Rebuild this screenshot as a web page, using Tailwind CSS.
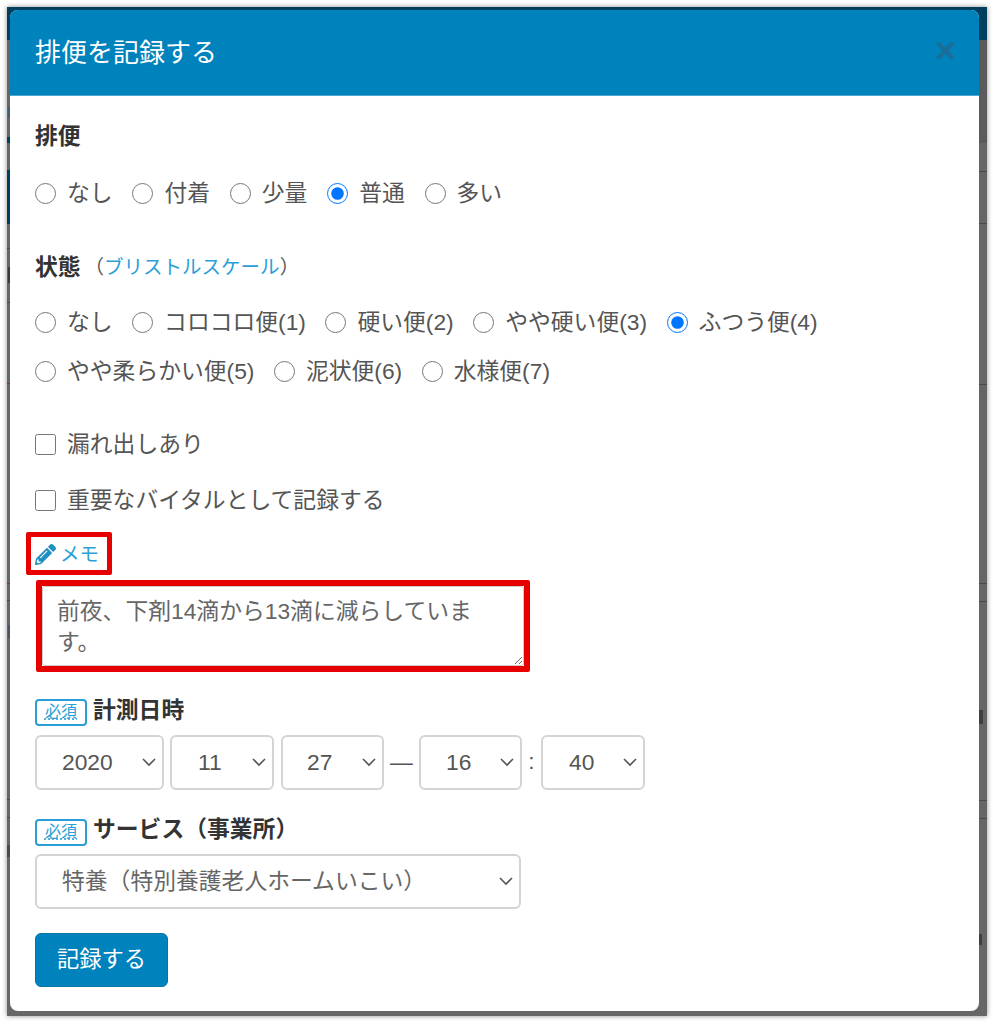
<!DOCTYPE html>
<html lang="ja">
<head>
<meta charset="utf-8">
<title>排便を記録する</title>
<script src="https://cdn.jsdelivr.net/npm/@tailwindcss/browser@4"></script>
</head>
<body class="bg-white w-[993px] h-[1024px] overflow-hidden font-['Liberation_Sans','Noto_Sans_CJK_JP',sans-serif] text-[22.8px] text-[#555]">
<div class="relative ml-[7px] mt-[7px] w-[980px] h-[1009px] bg-[#666] shadow-[0_0_5px_rgba(0,0,0,0.45)] pl-[3px] pt-[3px] overflow-hidden">
  <!-- page showing through the backdrop -->
  <div class="absolute left-0 top-0 w-full h-[33px] bg-[#003f5e]"></div>
  <div class="absolute left-[972px] top-[33px] w-[8px] h-[103px] bg-[#5b5b5b]"></div>
  <div class="absolute left-[1px] top-[100px] w-[2px] h-[11px] bg-[#3f5f72]"></div>
  <div class="absolute left-0 top-[130px] w-[3px] h-[6px] bg-[#003f5e]"></div>
  <div class="absolute left-0 top-[163px] w-[3px] h-[54px] bg-[#003f5e]"></div>
  <div class="absolute left-0 top-[241px] w-[3px] h-px bg-[#4a4a4a]"></div>
  <div class="absolute left-[1px] top-[260px] w-[2px] h-[16px] bg-[#3a3a3a]"></div>
  <div class="absolute left-0 top-[295px] w-[3px] h-px bg-[#4a4a4a]"></div>
  <div class="absolute left-0 top-[376px] w-[3px] h-px bg-[#7a3a34]"></div>
  <div class="absolute left-0 top-[576px] w-[3px] h-px bg-[#7a3a34]"></div>
  <div class="absolute left-0 top-[593px] w-[3px] h-px bg-[#4a4a4a]"></div>
  <div class="absolute left-[1px] top-[618px] w-[2px] h-[13px] bg-[#4a5560]"></div>
  <div class="absolute left-0 top-[792px] w-[3px] h-px bg-[#4a4a4a]"></div>
  <div class="absolute left-0 top-[810px] w-[3px] h-px bg-[#4a4a4a]"></div>
  <div class="absolute left-0 top-[838px] w-[3px] h-[12px] bg-[#4a4a4a]"></div>
  <div class="absolute left-[972px] top-[164px] w-[8px] h-px bg-[#4a4a4a]"></div>
  <div class="absolute left-[972px] top-[216px] w-[8px] h-px bg-[#4a4a4a]"></div>
  <div class="absolute left-[972px] top-[377px] w-[8px] h-px bg-[#4a4a4a]"></div>
  <div class="absolute left-[972px] top-[576px] w-[8px] h-px bg-[#4a4a4a]"></div>
  <div class="absolute left-[972px] top-[594px] w-[8px] h-px bg-[#4a4a4a]"></div>
  <div class="absolute left-[972px] top-[793px] w-[8px] h-px bg-[#4a4a4a]"></div>
  <div class="absolute left-[972px] top-[811px] w-[8px] h-px bg-[#4a4a4a]"></div>
  <div class="absolute left-[972px] top-[703px] w-[4px] h-[14px] bg-[#3f3f3f]"></div>
  <div class="absolute left-[972px] top-[927px] w-[3px] h-[11px] bg-[#3f3f3f]"></div>

  <main class="relative w-[969px] h-[1001px] bg-white rounded-[8px] overflow-hidden flex flex-col">
    <header class="h-[86px] shrink-0 bg-[#0082bd] border-b border-[#4da8d1] flex items-center justify-between pl-[25px] pr-[23px]">
      <h1 class="text-[26px] leading-none text-white font-normal mt-[1px]">排便を記録する</h1>
      <span class="text-[36px] leading-none font-bold text-[#1a6e98] -mt-[4px]">×</span>
    </header>

    <div class="pl-[25px] flex flex-col">
      <div class="mt-[26px] h-[28px] flex items-center font-bold text-[#333]">排便</div>

      <div class="mt-[27px] h-[32px] flex items-center gap-[19.8px]">
        <label class="flex items-center gap-[11px]"><input type="radio" name="a" class="m-0 w-[21px] h-[21px]"><span>なし</span></label>
        <label class="flex items-center gap-[11px]"><input type="radio" name="a" class="m-0 w-[21px] h-[21px]"><span>付着</span></label>
        <label class="flex items-center gap-[11px]"><input type="radio" name="a" class="m-0 w-[21px] h-[21px]"><span>少量</span></label>
        <label class="flex items-center gap-[11px]"><input type="radio" name="a" checked class="m-0 w-[21px] h-[21px]"><span>普通</span></label>
        <label class="flex items-center gap-[11px]"><input type="radio" name="a" class="m-0 w-[21px] h-[21px]"><span>多い</span></label>
      </div>

      <div class="mt-[44px] h-[28px] flex items-center"><span class="font-bold text-[#333]">状態</span><span class="ml-[4px] mt-[1px] text-[19.5px]">（<a class="text-[#2a9fd6]">ブリストルスケール</a>）</span></div>

      <div class="mt-[25px] h-[32px] flex items-center gap-[19.5px]">
        <label class="flex items-center gap-[11px]"><input type="radio" name="b" class="m-0 w-[21px] h-[21px]"><span>なし</span></label>
        <label class="flex items-center gap-[11px]"><input type="radio" name="b" class="m-0 w-[21px] h-[21px]"><span>コロコロ便(1)</span></label>
        <label class="flex items-center gap-[11px]"><input type="radio" name="b" class="m-0 w-[21px] h-[21px]"><span>硬い便(2)</span></label>
        <label class="flex items-center gap-[11px]"><input type="radio" name="b" class="m-0 w-[21px] h-[21px]"><span>やや硬い便(3)</span></label>
        <label class="flex items-center gap-[11px]"><input type="radio" name="b" checked class="m-0 w-[21px] h-[21px]"><span>ふつう便(4)</span></label>
      </div>
      <div class="mt-[17px] h-[32px] flex items-center gap-[19.5px]">
        <label class="flex items-center gap-[11px]"><input type="radio" name="b" class="m-0 w-[21px] h-[21px]"><span>やや柔らかい便(5)</span></label>
        <label class="flex items-center gap-[11px]"><input type="radio" name="b" class="m-0 w-[21px] h-[21px]"><span>泥状便(6)</span></label>
        <label class="flex items-center gap-[11px]"><input type="radio" name="b" class="m-0 w-[21px] h-[21px]"><span>水様便(7)</span></label>
      </div>

      <label class="mt-[41px] h-[32px] flex items-center gap-[11px]"><input type="checkbox" class="m-0 w-[21px] h-[21px]"><span>漏れ出しあり</span></label>
      <label class="mt-[24px] h-[32px] flex items-center gap-[11px]"><input type="checkbox" class="m-0 w-[21px] h-[21px]"><span>重要なバイタルとして記録する</span></label>

      <a class="mt-[16px] -ml-[9px] w-[86px] h-[43px] border-[5px] border-[#e60000] rounded-[2px] flex items-center gap-[4px] pl-[4px] text-[19.5px] text-[#2a9fd6]">
        <svg class="w-[21px] h-[21px] fill-[#1f8fc4] shrink-0 mt-[1px]" viewBox="0 0 512 512"><path d="M497.9 142.1l-46.1 46.1c-4.7 4.7-12.3 4.7-17 0l-111-111c-4.7-4.7-4.7-12.3 0-17l46.1-46.1c18.7-18.7 49.1-18.7 67.9 0l60.1 60.1c18.8 18.7 18.8 49.1 0 67.9zM284.2 99.8L21.6 362.4.4 483.9c-2.9 16.4 11.4 30.6 27.8 27.8l121.5-21.3 262.6-262.6c4.7-4.7 4.7-12.3 0-17l-111-111c-4.8-4.7-12.4-4.7-17.1 0zM124.1 339.9c-5.5-5.5-5.5-14.3 0-19.8l154-154c5.5-5.5 14.3-5.5 19.8 0s5.5 14.3 0 19.8l-154 154c-5.5 5.5-14.3 5.5-19.8 0zM88 424h48v36.3l-64.5 11.3-31.1-31.1L51.7 376H88v48z"/></svg>
        <span class="mt-[2px]">メモ</span>
      </a>

      <div class="mt-[5px] ml-[1px] w-[494px] h-[92px] border-[6px] border-[#e60000] rounded-[2px] bg-white">
        <textarea class="block w-[482px] h-[80px] pl-[14px] pr-[40px] py-[9px] border border-[#ccc] rounded-[3px] text-[22.8px] leading-[31px] text-[#666] outline-none">前夜、下剤14滴から13滴に減らしています。</textarea>
      </div>

      <div class="mt-[26px] h-[28px] flex items-center gap-[6px]">
        <span class="w-[52px] h-[27px] border-2 border-[#2a9fd6] rounded-[4px] flex items-center justify-center text-[16px] text-[#2a9fd6] underline decoration-dotted underline-offset-2">必須</span>
        <span class="font-bold text-[#333] -mt-[4px]">計測日時</span>
      </div>

      <div class="mt-[9px] h-[55px] flex items-center">
        <div class="relative w-[129px] h-[55px]"><select class="w-full h-full appearance-none bg-white border-2 border-[#d4d4d4] rounded-[6px] pl-[25px] text-[22.8px] text-[#555]"><option>2020</option></select><svg class="absolute right-[7px] top-[22px] w-[16px] h-[10px] fill-none stroke-[#555] stroke-[1.6]" viewBox="0 0 16 10"><path d="M2 2l6 6 6-6"/></svg></div>
        <div class="relative ml-[6px] w-[104px] h-[55px]"><select class="w-full h-full appearance-none bg-white border-2 border-[#d4d4d4] rounded-[6px] pl-[26px] text-[22.8px] text-[#555]"><option>11</option></select><svg class="absolute right-[7px] top-[22px] w-[16px] h-[10px] fill-none stroke-[#555] stroke-[1.6]" viewBox="0 0 16 10"><path d="M2 2l6 6 6-6"/></svg></div>
        <div class="relative ml-[7px] w-[103px] h-[55px]"><select class="w-full h-full appearance-none bg-white border-2 border-[#d4d4d4] rounded-[6px] pl-[24px] text-[22.8px] text-[#555]"><option>27</option></select><svg class="absolute right-[7px] top-[22px] w-[16px] h-[10px] fill-none stroke-[#555] stroke-[1.6]" viewBox="0 0 16 10"><path d="M2 2l6 6 6-6"/></svg></div>
        <span class="w-[35px] text-center">—</span>
        <div class="relative w-[103px] h-[55px]"><select class="w-full h-full appearance-none bg-white border-2 border-[#d4d4d4] rounded-[6px] pl-[25px] text-[22.8px] text-[#555]"><option>16</option></select><svg class="absolute right-[7px] top-[22px] w-[16px] h-[10px] fill-none stroke-[#555] stroke-[1.6]" viewBox="0 0 16 10"><path d="M2 2l6 6 6-6"/></svg></div>
        <span class="w-[19px] text-center -mt-[3px]">:</span>
        <div class="relative w-[104px] h-[55px]"><select class="w-full h-full appearance-none bg-white border-2 border-[#d4d4d4] rounded-[6px] pl-[26px] text-[22.8px] text-[#555]"><option>40</option></select><svg class="absolute right-[7px] top-[22px] w-[16px] h-[10px] fill-none stroke-[#555] stroke-[1.6]" viewBox="0 0 16 10"><path d="M2 2l6 6 6-6"/></svg></div>
      </div>

      <div class="mt-[28px] h-[28px] flex items-center gap-[6px]">
        <span class="w-[52px] h-[27px] border-2 border-[#2a9fd6] rounded-[4px] flex items-center justify-center text-[16px] text-[#2a9fd6] underline decoration-dotted underline-offset-2">必須</span>
        <span class="font-bold text-[#333] -mt-[5px]">サービス（事業所）</span>
      </div>

      <div class="relative mt-[8px] w-[486px] h-[55px]"><select class="w-full h-full appearance-none bg-white border-2 border-[#d4d4d4] rounded-[6px] pl-[25px] text-[22.8px] text-[#666]"><option>特養（特別養護老人ホームいこい）</option></select><svg class="absolute right-[7px] top-[22px] w-[16px] h-[10px] fill-none stroke-[#555] stroke-[1.6]" viewBox="0 0 16 10"><path d="M2 2l6 6 6-6"/></svg></div>

      <button class="mt-[24px] w-[133px] h-[54px] bg-[#0082bd] border border-[#0077ad] rounded-[6px] text-white text-[22.3px]">記録する</button>
    </div>
  </main>
</div>
</body>
</html>
